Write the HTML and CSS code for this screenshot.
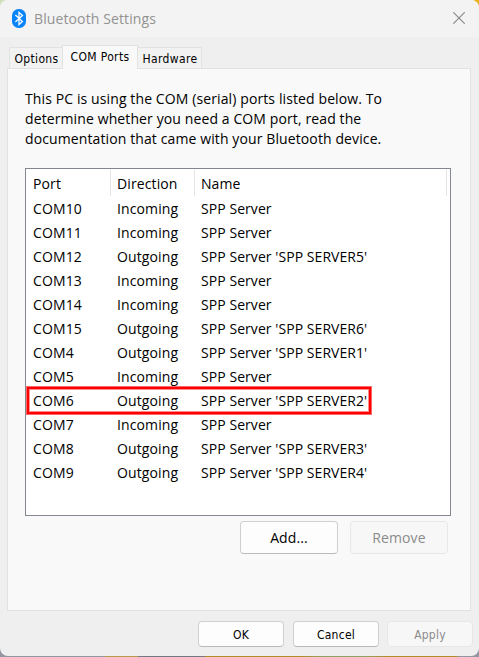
FILE: index.html
```html
<!DOCTYPE html>
<html lang="en">
<head>
<meta charset="utf-8">
<title>Bluetooth Settings</title>
<link rel="stylesheet" href="styles.css">
</head>
<body>
<main class="window">
  <header class="titlebar">
    <svg class="logo" width="14" height="19" viewBox="0 0 14 19"><rect width="14" height="19" rx="6.5" fill="#0a84fa"/><path d="M3.4 6l7 6.4L7 15.6V3.4l3.4 3.2-7 6.4" fill="none" stroke="#fff" stroke-width="1.3"/></svg>
    <h1 class="title">Bluetooth Settings</h1>
    <svg class="close" width="12" height="12" viewBox="0 0 12 12"><path d="M.3.3l11.4 11.4M11.7.3L.3 11.7" stroke="#858585" stroke-width="1.1"/></svg>
  </header>
  <nav class="tabs">
    <span class="tab tab-options">Options</span>
    <span class="tab tab-active">COM Ports</span>
    <span class="tab tab-hardware">Hardware</span>
  </nav>
  <section class="panel">
    <p class="intro">This PC is using the COM (serial) ports listed below. To<br>determine whether you need a COM port, read the<br>documentation that came with your Bluetooth device.</p>
    <div class="list">
      <div class="row head"><span>Port</span><span>Direction</span><span>Name</span></div>
      <div class="row"><span>COM10</span><span>Incoming</span><span>SPP Server</span></div>
      <div class="row"><span>COM11</span><span>Incoming</span><span>SPP Server</span></div>
      <div class="row"><span>COM12</span><span>Outgoing</span><span>SPP Server 'SPP SERVER5'</span></div>
      <div class="row"><span>COM13</span><span>Incoming</span><span>SPP Server</span></div>
      <div class="row"><span>COM14</span><span>Incoming</span><span>SPP Server</span></div>
      <div class="row"><span>COM15</span><span>Outgoing</span><span>SPP Server 'SPP SERVER6'</span></div>
      <div class="row"><span>COM4</span><span>Outgoing</span><span>SPP Server 'SPP SERVER1'</span></div>
      <div class="row"><span>COM5</span><span>Incoming</span><span>SPP Server</span></div>
      <div class="row marked"><span>COM6</span><span>Outgoing</span><span>SPP Server 'SPP SERVER2'</span></div>
      <div class="row"><span>COM7</span><span>Incoming</span><span>SPP Server</span></div>
      <div class="row"><span>COM8</span><span>Outgoing</span><span>SPP Server 'SPP SERVER3'</span></div>
      <div class="row"><span>COM9</span><span>Outgoing</span><span>SPP Server 'SPP SERVER4'</span></div>
    </div>
    <div class="actions">
      <button class="btn">Add...</button>
      <button class="btn" disabled>Remove</button>
    </div>
  </section>
  <footer class="footer">
    <button class="btn small ok">OK</button>
    <button class="btn small">Cancel</button>
    <button class="btn small" disabled>Apply</button>
  </footer>
</main>
</body>
</html>
```
FILE: styles.css
```css
*, *::after { box-sizing: border-box; }
body {
  margin: 0;
  height: 657px;
  overflow: hidden;
  background:
    linear-gradient(#d2dfbd, #d2dfbd) 0 0 / 12px 12px no-repeat,
    linear-gradient(#e8b318, #e8b318) 100% 0 / 12px 12px no-repeat,
    linear-gradient(90deg, #9496a4 0 105px, #b39a4d 105px 138px, #777781 138px 205px, #b18d28 205px 300px, #91a166 325px 365px, #b18d28 390px 455px, #9496a4 460px);
  font-family: "Open Sans", "Noto Sans", sans-serif;
  font-size: 14px;
  letter-spacing: 0.11px;
  color: #000;
}
.window {
  height: 656px;
  display: flex;
  flex-direction: column;
  background: #efefef;
  border-radius: 8px;
  overflow: hidden;
}
.titlebar {
  height: 37px;
  flex: none;
  display: flex;
  align-items: center;
  padding: 0 14px 1px 12px;
  background: #f3f3f3;
}
.title {
  margin: 0 auto 0 8px;
  font-size: 14px;
  font-weight: 400;
  color: #929292;
}
.tabs {
  height: 31px;
  flex: none;
  display: flex;
  align-items: flex-end;
  padding-left: 9px;
  font-family: "DejaVu Sans Condensed", "DejaVu Sans", sans-serif;
  font-size: 12px;
  letter-spacing: 0.35px;
}
.tab {
  height: 21px;
  padding-left: 1px;
  border: 1px solid #e2e2e2;
  border-bottom: 0;
  background: #f2f2f2;
  line-height: 23px;
  text-align: center;
  white-space: nowrap;
}
.tab-options { width: 53px; border-right: 0; }
.tab-active {
  width: 76px;
  height: 24px;
  padding-left: 0;
  margin-bottom: -1px;
  background: #f9f9f9;
  line-height: 22px;
  position: relative;
}
.tab-hardware { width: 64px; border-left: 0; }
.panel {
  width: 464px;
  height: 543px;
  flex: none;
  margin-left: 7px;
  padding: 20px 19px 0 17px;
  border: 1px solid #e2e2e2;
  background: #f9f9f9;
}
.intro { margin: 0; height: 79px; line-height: 20px; white-space: nowrap; }
.list {
  width: 426px;
  height: 348px;
  border: 1px solid #828790;
  background: #fff;
}
.row {
  display: grid;
  grid-template-columns: 84px 84px 253px;
  height: 24px;
  line-height: 24px;
  white-space: nowrap;
}
.row span { padding-left: 7px; }
.row span:last-child { letter-spacing: 0.06px; }
.head { height: 28px; line-height: 28px; padding-top: 1px; }
.head span { height: 26px; border-right: 1px solid #e5e5e5; }
.head span:first-child { width: 85px; }
.head span:nth-child(2) { width: 85px; }
.marked { position: relative; }
.marked::after {
  content: "";
  position: absolute;
  left: 1px;
  top: -2px;
  width: 344px;
  height: 27px;
  border: 2px solid #f00;
  box-shadow: 0 0 0 1px rgba(255, 0, 0, 0.6), inset 0 0 0 1px rgba(255, 0, 0, 0.45);
}
.actions { display: flex; gap: 12px; margin: 5px 3px 0 0; justify-content: flex-end; }
.btn {
  width: 98px;
  height: 33px;
  padding: 0;
  border: 1px solid #d0d0d0;
  border-bottom-color: #bababa;
  border-radius: 4px;
  background: #fdfdfd;
  font: inherit;
  letter-spacing: inherit;
  color: #000;
}
.btn:disabled { background: #f7f7f7; border-color: #e7e7e7; color: #8b8b8b; }
.footer { display: flex; gap: 8px; justify-content: flex-end; padding: 10px 6px 0 0; }
.small {
  width: 86px;
  height: 26px;
  padding-top: 1px;
  font-family: "DejaVu Sans Condensed", "DejaVu Sans", sans-serif;
  font-size: 12px;
  letter-spacing: 0.25px;
}
.ok { margin-right: 1px; }
```
